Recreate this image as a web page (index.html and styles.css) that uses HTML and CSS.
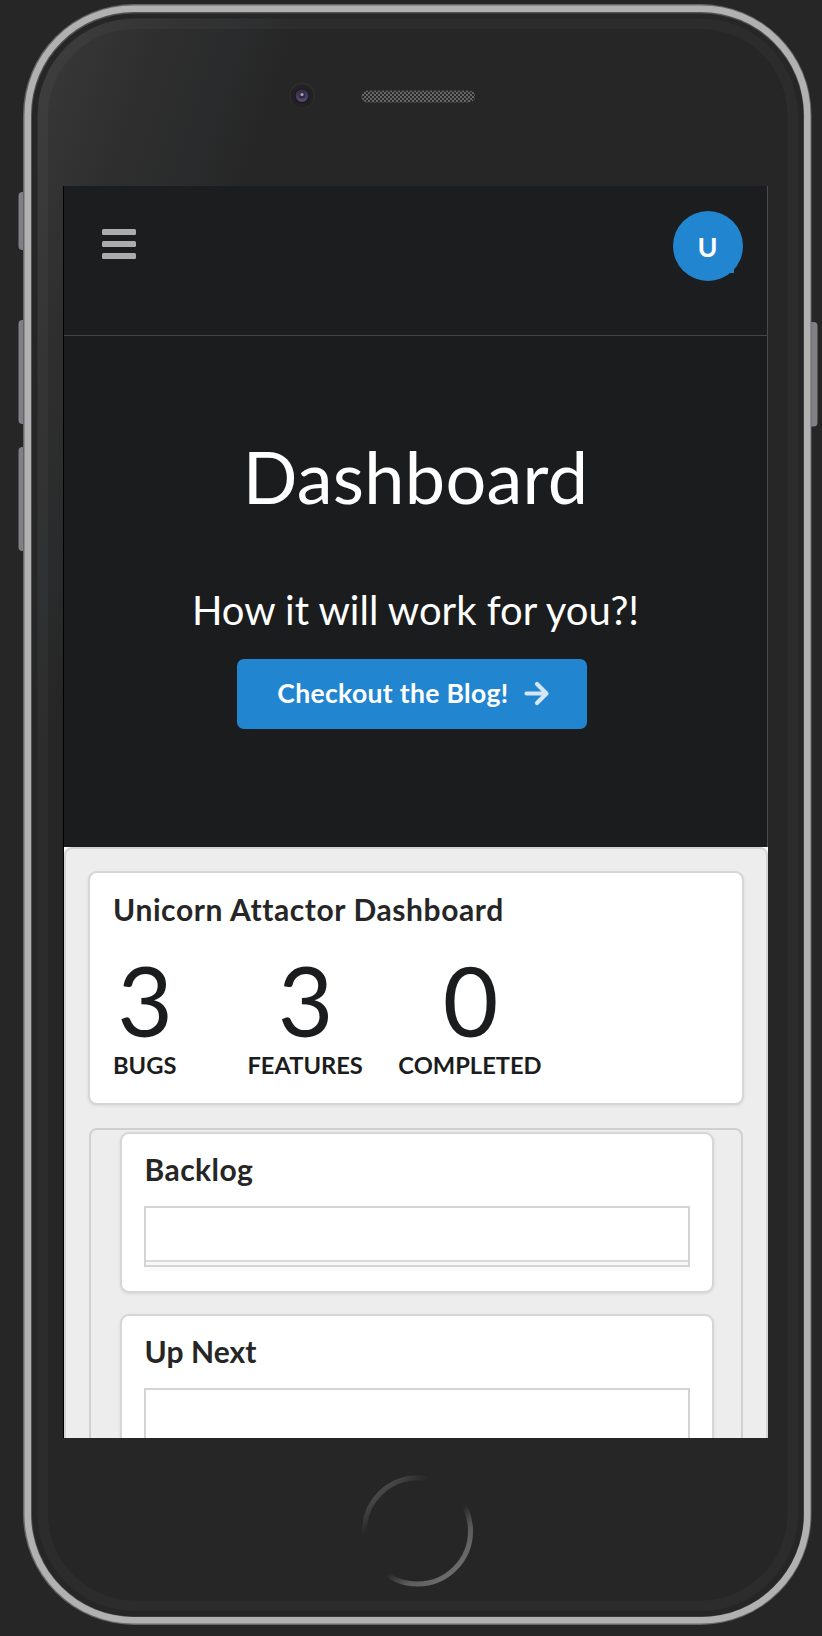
FILE: index.html
```html
<!DOCTYPE html>
<html lang="en">
<head>
<meta charset="utf-8">
<title>Dashboard</title>
<link rel="stylesheet" href="styles.css">
</head>
<body>
<div class="device">
  <svg class="shell" width="822" height="1636" viewBox="0 0 822 1636" aria-hidden="true">
    <defs>
      <linearGradient id="glare" gradientUnits="userSpaceOnUse" x1="40" y1="60" x2="295" y2="149">
        <stop offset="0" stop-color="#383838"/><stop offset=".4" stop-color="#2e2e2e"/>
        <stop offset=".66" stop-color="#2a2b2c"/><stop offset=".86" stop-color="#262626"/>
      </linearGradient>
      <linearGradient id="ring" gradientUnits="userSpaceOnUse" x1="381" y1="1490" x2="454" y2="1572">
        <stop offset="0" stop-color="#4a4a4a"/><stop offset=".2" stop-color="#262626"/>
        <stop offset=".61" stop-color="#262626"/><stop offset=".8" stop-color="#5c5c5c"/><stop offset="1" stop-color="#6c6c6c"/>
      </linearGradient>
      <pattern id="mesh" width="4" height="4" patternUnits="userSpaceOnUse">
        <rect width="4" height="4" fill="#2b2b2b"/><path d="M0 0h2v2H0zM2 2h2v2H2z" fill="#666"/>
      </pattern>
      <linearGradient id="lens" x1="0" y1="0" x2="0" y2="1">
        <stop offset="0" stop-color="#33264a"/><stop offset="1" stop-color="#5d4d7c"/>
      </linearGradient>
    </defs>
    <g fill="#808086">
      <rect x="18.500" y="192" width="10" height="58" rx="4"/>
      <rect x="18.500" y="320" width="10" height="104" rx="4"/>
      <rect x="18.500" y="447" width="10" height="104" rx="4"/>
      <rect x="807" y="322" width="10.500" height="104.500" rx="4"/>
    </g>
    <rect x="23" y="4" width="788.500" height="1621" rx="111" fill="#666"/>
    <rect x="24.500" y="5.500" width="786" height="1618" rx="109" fill="#b1b1b1"/>
    <rect x="31" y="12" width="773" height="1605" rx="103" fill="#505050"/>
    <rect x="32" y="13.500" width="771.500" height="1603" rx="102" fill="#262626"/>
    <rect x="37.500" y="18.500" width="760.500" height="1592.500" rx="97" fill="url(#glare)"/>
    <rect x="42.750" y="23.750" width="750" height="1582" rx="92" fill="none" stroke="#fff" stroke-opacity=".03" stroke-width="10.500"/>
    <circle cx="302" cy="95.500" r="13" fill="#2d2d2d"/>
    <circle cx="302" cy="96" r="11.500" fill="#222223"/>
    <circle cx="302" cy="96" r="7.500" fill="#1c1a20"/>
    <circle cx="302" cy="95.500" r="6.300" fill="url(#lens)"/>
    <circle cx="302" cy="95.500" r="3.200" fill="#302d37"/>
    <circle cx="302" cy="94.500" r="1.600" fill="#a9a6b0"/>
    <rect x="361.500" y="90.500" width="113.500" height="12" rx="6" fill="url(#mesh)"/>
    <circle cx="417.500" cy="1531" r="53" fill="none" stroke="url(#ring)" stroke-width="5"/>
  </svg>
  <main class="screen">
    <header class="topbar">
      <svg class="menu" width="34" height="31" viewBox="0 0 34 31" fill="#abacac"><rect y="0" width="34" height="6" rx="1.500"/><rect y="12" width="34" height="6" rx="1.500"/><rect y="24" width="34" height="6" rx="1.500"/></svg>
      <div class="avatar">U</div>
    </header>
    <section class="hero">
      <h1 class="hero-title">Dashboard</h1>
      <p class="hero-text">How it will work for you?!</p>
      <a class="button"><span class="button-label">Checkout the Blog!</span><svg class="arrow" width="26" height="26" viewBox="0 0 26 26" fill="none" stroke="#d3e7f6" stroke-width="4.200" stroke-linecap="round" stroke-linejoin="round"><path d="M2.500 12.500H22M13 3l9.500 9.500L13 22"/></svg></a>
    </section>
    <section class="panel">
      <div class="card summary">
        <h2 class="card-title main-title">Unicorn Attactor Dashboard</h2>
        <div class="stats">
          <div class="stat bugs"><span class="value">3</span><span class="label">BUGS</span></div>
          <div class="stat features"><span class="value">3</span><span class="label">FEATURES</span></div>
          <div class="stat completed"><span class="value">0</span><span class="label">COMPLETED</span></div>
        </div>
      </div>
      <div class="board">
        <div class="card column"><h2 class="card-title">Backlog</h2><div class="list"><div class="list-inner"></div></div></div>
        <div class="card column"><h2 class="card-title next">Up Next</h2><div class="list"><div class="list-inner"></div></div></div>
      </div>
    </section>
  </main>
</div>
</body>
</html>
```
FILE: styles.css
```css
* { box-sizing: border-box; }
body { margin: 0; background: #262626; font-family: Lato, sans-serif; }
h1, h2, p { margin: 0; }
.device { position: relative; width: 822px; height: 1636px; overflow: hidden; padding: 186px 54px 0 63px; }
.shell { position: absolute; inset: 0; }
.screen { position: relative; display: flex; flex-direction: column; height: 1252px; overflow: hidden; border-left: 1px solid #000; background: #fff; }
.topbar { display: flex; justify-content: space-between; align-items: flex-start; flex: 0 0 150px; padding: 25px 24.5px 0 38px; background: #1b1d1e; border-bottom: 1px solid #444546; border-right: 1px solid #4a4a4a; }
.menu { margin-top: 17.500px; }
.avatar { width: 70px; height: 70px; border-radius: 50%; background: #2185d0; color: #fff; font-size: 27px; font-weight: 700; line-height: 71px; text-align: center; position: relative; }
.avatar::after { content: ""; position: absolute; right: 8.500px; bottom: 8.500px; width: 8px; height: 8px; background: #2185d0; }
.hero { display: flex; flex-direction: column; align-items: center; flex: 0 0 511px; padding-top: 104px; background: #1b1c1d; border-right: 1px solid #4a4a4a; color: #fff; }
.hero-title { font-size: 72px; font-weight: 400; line-height: 72px; letter-spacing: .3px; }
.hero-text { margin-top: 78px; font-size: 40px; line-height: 40px; white-space: nowrap; }
.button { display: flex; align-items: center; width: 350px; height: 70px; margin: 28.500px 6.500px 0 0; padding-left: 40px; border-radius: 7px; background: #2185d0; font-size: 26.500px; font-weight: 700; letter-spacing: .35px; white-space: nowrap; }
.button-label { width: 231px; padding-bottom: 2px; }
.arrow { margin-left: 16px; }
.panel { flex: 0 0 auto; height: 700px; padding: 22px 22px 0; border: 2px solid #d4d4d5; border-radius: 8px 8px 0 0; background: #ededed; }
.card { border: 2px solid #d6d6d7; border-radius: 9px; background: #fff; box-shadow: 0 1px 3px rgba(34, 36, 38, .1); }
.card-title { color: #262626; font-size: 30px; font-weight: 700; line-height: 36px; letter-spacing: .45px; white-space: nowrap; }
.main-title { letter-spacing: .6px; }
.next { letter-spacing: .1px; }
.summary { height: 234px; padding: 18px 24px 0 23px; }
.stats { display: flex; margin-top: 25px; }
.stat { display: flex; flex-direction: column; align-items: center; gap: 5px; color: #1b1c1d; }
.value { padding-left: 1px; font-size: 96px; line-height: 96px; }
.label { font-size: 23.700px; font-weight: 700; line-height: 24px; }
.features { margin-left: 71px; }
.completed { margin-left: 35.500px; }
.board { display: flex; flex-direction: column; gap: 21px; height: 500px; margin: 23px 1px 0; padding: 1.500px 27px 0 28.500px; border: 2px solid #d0d0d1; border-radius: 8px; }
.column { flex: 0 0 161px; padding: 17px 22px 0; }
.column .card-title { padding-left: 1px; }
.list { height: 61px; margin-top: 19px; border: 2px solid #d4d4d5; background: #f7f7f7; box-shadow: 0 4px 0 #fafafa; }
.list-inner { height: 54px; border-bottom: 2px solid #dadada; background: #fff; }
```
